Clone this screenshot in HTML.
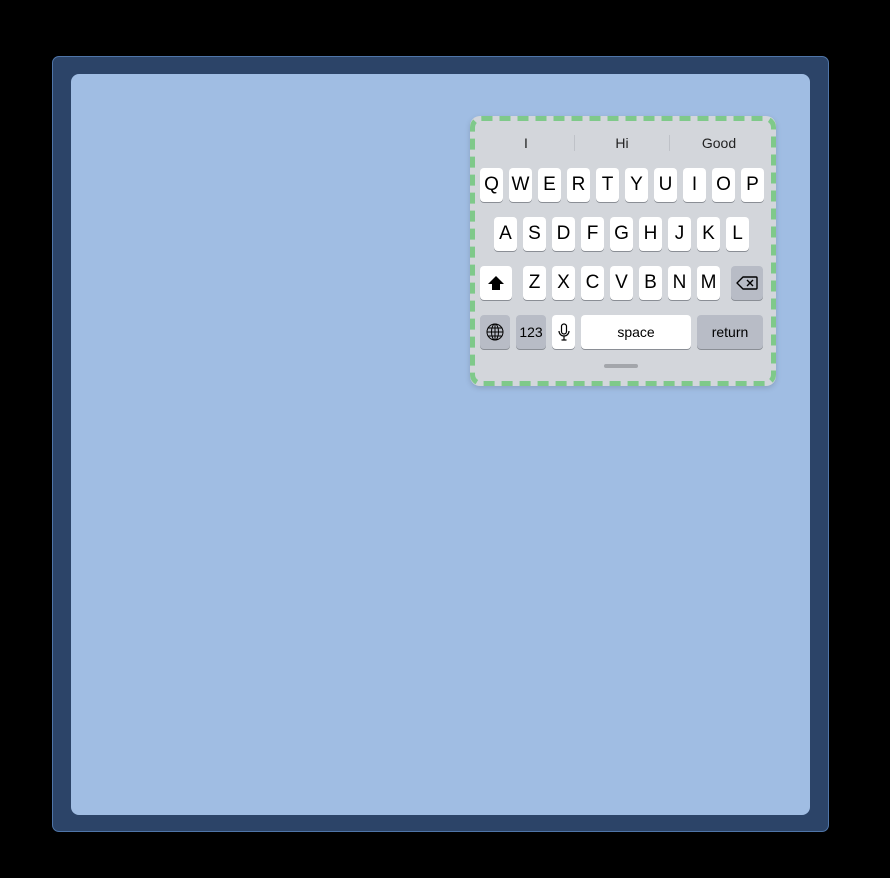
<!DOCTYPE html>
<html><head><style>
body{margin:0;width:890px;height:878px;background:#000;position:relative;font-family:"Liberation Sans",sans-serif;overflow:hidden}
.outer{position:absolute;left:52px;top:56px;width:775px;height:774px;background:#2c4468;border:1px solid #4f75a8;border-radius:7px}
.inner{position:absolute;left:71px;top:74px;width:739px;height:741px;background:#a0bde3;border-radius:8px}
.kb{position:absolute;left:470px;top:116px;width:306px;height:270px;background:#d3d6db;border-radius:10px;box-shadow:0 2px 6px rgba(0,0,0,.15)}
.k{position:absolute;width:23px;height:34px;background:#fff;border-radius:4px;box-shadow:0 1px 0 #8a8e95;font-size:19px;color:#000;display:flex;align-items:center;justify-content:center}
.d{background:#b8bcc6}
.s{position:absolute;top:135px;font-size:14px;color:#222;width:60px;text-align:center}
.sep{position:absolute;top:135px;width:1px;height:16px;background:#bfc2c8}
</style></head><body>
<div class="outer"></div><div class="inner"></div>
<div class="kb"></div>
<svg style="position:absolute;left:0;top:0" width="890" height="878"><rect x="472.5" y="118.5" width="301" height="265" rx="9" fill="none" stroke="#7fc98a" stroke-width="5" stroke-dasharray="11 7"/></svg>
<div class="s" style="left:496px">I</div>
<div class="sep" style="left:574px"></div>
<div class="s" style="left:592px">Hi</div>
<div class="sep" style="left:669px"></div>
<div class="s" style="left:689px">Good</div>
<div class="k" style="left:480px;top:168px">Q</div>
<div class="k" style="left:509px;top:168px">W</div>
<div class="k" style="left:538px;top:168px">E</div>
<div class="k" style="left:567px;top:168px">R</div>
<div class="k" style="left:596px;top:168px">T</div>
<div class="k" style="left:625px;top:168px">Y</div>
<div class="k" style="left:654px;top:168px">U</div>
<div class="k" style="left:683px;top:168px">I</div>
<div class="k" style="left:712px;top:168px">O</div>
<div class="k" style="left:741px;top:168px">P</div>
<div class="k" style="left:494px;top:217px">A</div>
<div class="k" style="left:523px;top:217px">S</div>
<div class="k" style="left:552px;top:217px">D</div>
<div class="k" style="left:581px;top:217px">F</div>
<div class="k" style="left:610px;top:217px">G</div>
<div class="k" style="left:639px;top:217px">H</div>
<div class="k" style="left:668px;top:217px">J</div>
<div class="k" style="left:697px;top:217px">K</div>
<div class="k" style="left:726px;top:217px">L</div>
<div class="k" style="left:480px;top:266px;width:32px"><svg width="18" height="16" viewBox="0 0 18 16"><path d="M9 1L1 9h4v6h8V9h4z" fill="#000"/></svg></div>
<div class="k" style="left:523px;top:266px">Z</div>
<div class="k" style="left:552px;top:266px">X</div>
<div class="k" style="left:581px;top:266px">C</div>
<div class="k" style="left:610px;top:266px">V</div>
<div class="k" style="left:639px;top:266px">B</div>
<div class="k" style="left:668px;top:266px">N</div>
<div class="k" style="left:697px;top:266px">M</div>
<div class="k d" style="left:731px;top:266px;width:32px"><svg width="22" height="14" viewBox="0 0 22 14"><path d="M7 1h13a1 1 0 0 1 1 1v10a1 1 0 0 1-1 1H7L1 7z" fill="none" stroke="#000" stroke-width="1.4" stroke-linejoin="round"/><path d="M11 4l6 6M17 4l-6 6" stroke="#000" stroke-width="1.4"/></svg></div>
<div class="k d" style="left:480px;top:315px;width:30px"><svg width="18" height="18" viewBox="0 0 18 18" fill="none" stroke="#000" stroke-width="1"><circle cx="9" cy="9" r="8"/><ellipse cx="9" cy="9" rx="3.5" ry="8"/><path d="M1 9h16M9 1v16M2.5 5h13M2.5 13h13"/></svg></div>
<div class="k d" style="left:516px;top:315px;width:30px;font-size:14px">123</div>
<div class="k" style="left:552px;top:315px"><svg width="12" height="18" viewBox="0 0 12 18" fill="none" stroke="#000" stroke-width="1.2"><rect x="3.5" y="1" width="5" height="10" rx="2.5"/><path d="M1 8a5 5 0 0 0 10 0M6 13v4M3.5 17h5"/></svg></div>
<div class="k" style="left:581px;top:315px;width:110px;font-size:14px">space</div>
<div class="k d" style="left:697px;top:315px;width:66px;font-size:14px">return</div>
<div style="position:absolute;left:604px;top:364px;width:34px;height:4px;border-radius:2px;background:#a3a6ab"></div>
</body></html>
